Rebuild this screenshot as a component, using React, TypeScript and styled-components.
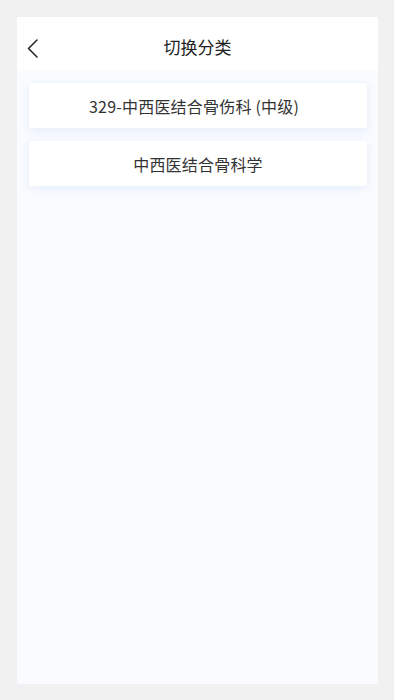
import React from "react";
import styled, { createGlobalStyle } from "styled-components";

const Global = createGlobalStyle`
  html, body {
    margin: 0;
    padding: 0;
    background: #f1f1f1;
  }
  body {
    font-family: "Noto Sans CJK SC", "Noto Sans", sans-serif;
  }
`;

const Page = styled.div`
  padding: 17px 0 0 17px;
`;

const Frame = styled.div`
  width: 361px;
  height: 667px;
  background: #f9fbff;
  display: flex;
  flex-direction: column;
`;

const Header = styled.header`
  height: 54px;
  box-sizing: border-box;
  padding-top: 5px;
  background: #ffffff;
  display: flex;
  align-items: center;
  justify-content: center;
  position: relative;
`;

const BackButton = styled.button`
  position: absolute;
  left: 10px;
  top: 22px;
  border: 0;
  background: transparent;
  padding: 0;
  width: 11px;
  height: 19px;
  display: flex;
  align-items: center;
  justify-content: center;
`;

const Title = styled.h1`
  margin: 0;
  font-size: 17px;
  font-weight: 400;
  color: #222;
  line-height: 1;
`;

const List = styled.div`
  display: flex;
  flex-direction: column;
  gap: 13px;
  padding: 12px 11px 0 12px;
`;

const Card = styled.div<{ $shift?: number }>`
  height: 45px;
  box-sizing: border-box;
  padding-right: ${(p) => (p.$shift ?? 0) * 2}px;
  background: #ffffff;
  border-radius: 2px;
  box-shadow: 0 2px 8px rgba(205, 220, 245, 0.45);
  display: flex;
  align-items: center;
  justify-content: center;
  font-size: 16px;
  color: #333;
  letter-spacing: 0.2px;
`;

const items = [
  { text: "329-中西医结合骨伤科 (中级)", shift: 4 },
  { text: "中西医结合骨科学", shift: 0 },
];

export default function App() {
  return (
    <>
      <Global />
      <Page>
        <Frame>
          <Header>
            <BackButton aria-label="back">
              <svg width="11" height="19" viewBox="0 0 11 19" fill="none">
                <path d="M10 1 L1.5 9.5 L10 18" stroke="#222" strokeWidth="1.5" strokeLinecap="round" strokeLinejoin="round" />
              </svg>
            </BackButton>
            <Title>切换分类</Title>
          </Header>
          <List>
            {items.map((it) => (
              <Card key={it.text} $shift={it.shift}>
                {it.text}
              </Card>
            ))}
          </List>
        </Frame>
      </Page>
    </>
  );
}
